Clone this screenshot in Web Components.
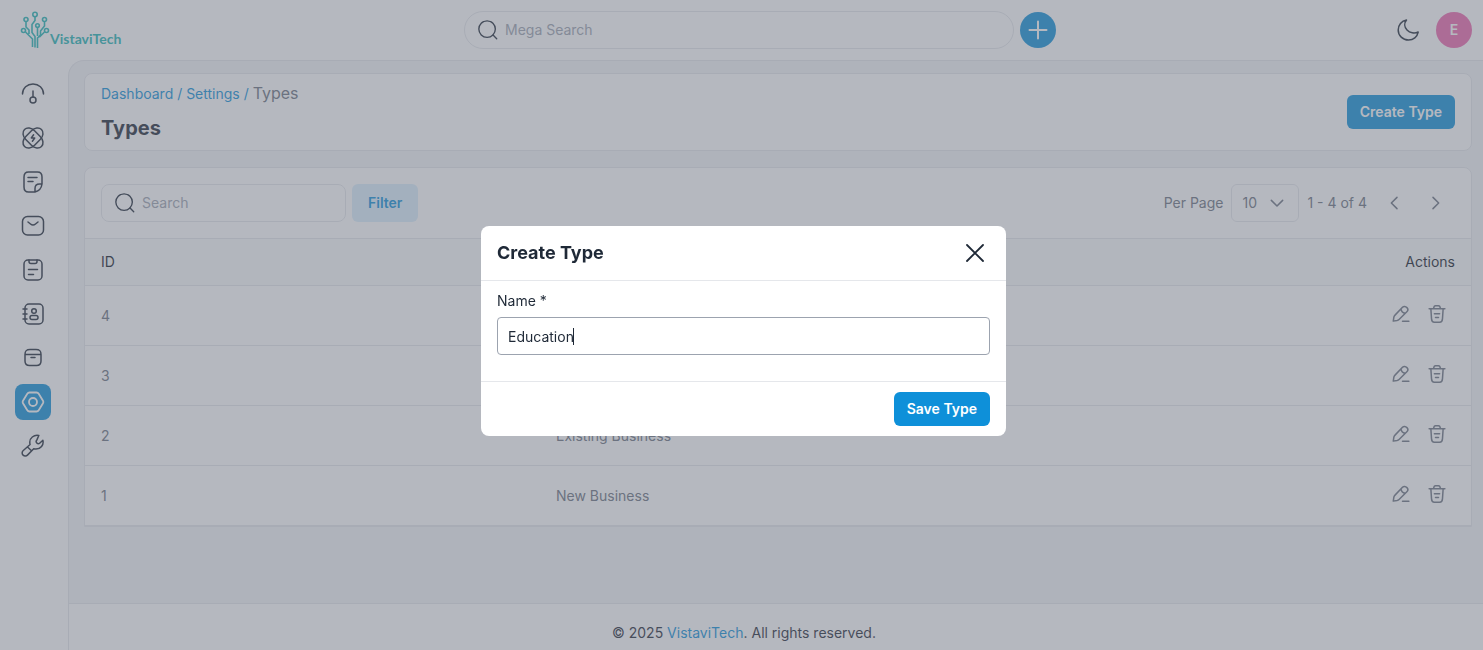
<!DOCTYPE html>
<html lang="en">
<head>
<meta charset="utf-8">
<meta name="viewport" content="width=device-width, initial-scale=1">
<title>Types - VistaviTech</title>
<style>
  :root {
    --primary: #0e90d9;
    --line: #e5e7eb;
    --ink: #1f2937;
    --muted: #6b7280;
    --canvas: #f3f4f6;
  }
  body {
    margin: 0;
    background: #fff;
    color: var(--ink);
    font: 14px/20px Inter, "Noto Sans", sans-serif;
  }
</style>
</head>
<body>
<app-shell>
  <app-header slot="header"></app-header>
  <side-nav slot="nav">
    <nav-item icon="gauge" label="Dashboard"></nav-item>
    <nav-item icon="atom" label="Leads"></nav-item>
    <nav-item icon="note" label="Notes"></nav-item>
    <nav-item icon="mail" label="Mail"></nav-item>
    <nav-item icon="clipboard" label="Tasks"></nav-item>
    <nav-item icon="contacts" label="Contacts"></nav-item>
    <nav-item icon="box" label="Products"></nav-item>
    <nav-item icon="hexagon" label="Settings" active></nav-item>
    <nav-item icon="wrench" label="Configuration"></nav-item>
  </side-nav>
  <page-heading heading="Types">
    <ui-button slot="action">Create Type</ui-button>
  </page-heading>
  <types-grid></types-grid>
  <page-footer slot="footer"></page-footer>
</app-shell>
<type-dialog></type-dialog>

<script>
const ICONS = {
  gauge: '<path d="M1.500 12C1.500 6 6.200 2 12 2s10.500 4 10.500 10M12 9v6"/><circle cx="12" cy="18" r="3"/>',
  atom: '<rect x="0" y="5.800" width="24" height="12.400" rx="8" ry="6.200" transform="rotate(45 12 12)"/><rect x="0" y="5.800" width="24" height="12.400" rx="8" ry="6.200" transform="rotate(-45 12 12)"/><path d="M12.600 8.800 10.300 12h3.400l-2.300 3.200"/>',
  note: '<path d="M21 14V7c0-3-1.500-5-4.500-5h-9C4.500 2 3 4 3 7v10c0 3 1.500 5 4.500 5H14c4-1 6.500-4 7-8ZM14 22v-3.500c0-3 1.500-4.500 4.500-4.500H21M7 7.500h9M7 11.500h5"/>',
  mail: '<rect x="1.500" y="2.500" width="21" height="18.500" rx="5"/><path d="M7 8l2.500 2c1.500 1.200 3.500 1.200 5 0L17 8"/>',
  clipboard: '<rect x="3" y="2" width="18" height="20" rx="4"/><path d="M8 2v1.500C8 5 8.500 5.500 10 5.500h4c1.500 0 2-.5 2-2V2M7.500 11.500h9M7.500 16.500h5"/>',
  contacts: '<rect x="4" y="2" width="18" height="20" rx="4"/><path d="M2 7h4M2 12h4M2 17h4"/><circle cx="13" cy="9" r="2.300"/><rect x="9" y="13.500" width="8" height="4" rx="2"/>',
  box: '<path d="M4 8.500c0-4 1.500-5 5-5h6c3.500 0 5 1 5 5zM4 8.500h16V15c0 3.500-1.500 4.500-4.500 4.500h-7C5.500 19.500 4 18.500 4 15zM10 11.500h4"/>',
  hexagon: '<path d="M8.500 2.500h7c1 0 1.700.4 2.200 1.200l4.300 7c.5.800.5 1.800 0 2.600l-4.300 7c-.5.800-1.200 1.200-2.200 1.200h-7c-1 0-1.700-.4-2.200-1.200l-4.300-7c-.5-.8-.5-1.800 0-2.600l4.300-7c.5-.8 1.200-1.200 2.200-1.200Z"/><circle cx="12" cy="12" r="4"/>',
  wrench: '<path d="M17.800 1.500c-5-1-9.300 2.700-9 7 0 .8.1 1.400.3 2L2.300 16.500c-1.500 1.300-1.500 3.300-.2 4.600s3.200 1.200 4.600-.2l6-6.200c.8.300 1.500.4 2.300.4 4.500 0 8-4 6.900-8.800l-3 2.700c-1 .9-2.300.8-3.100 0s-.8-2.100.1-3.100zM6.500 13l4 3.800"/>',
  search: '<circle cx="11" cy="11" r="9"/><path d="m17.500 17.500 4 4"/>',
  plus: '<path d="M12 3.500v17M3.500 12h17"/>',
  moon: '<path d="M10.500 2C8 5 8.200 9 11 12s7.500 3.800 11.200 2c-1 4.800-4.800 8-9.700 8C6.800 22 2.200 17.700 2.200 12c0-5 3.300-9.200 8.300-10Z"/>',
  edit: '<path d="M14 3 4 13.500c-.8.800-1.300 1.700-1.500 2.700L1.700 21.500l5-.7c1-.2 2-.7 2.700-1.500L19.800 9c1.700-1.700 1.900-3.700.1-5.500S15.700 1.300 14 3ZM12 5.500c.5 3 2.500 5 5.500 5.500M14 21.500h8.500"/>',
  trash: '<path d="M1.500 5h21M7.500 4.700c.3-2.600 1-3.700 2.500-3.700h4c1.500 0 2.200 1.100 2.500 3.700M3.800 5l.9 13.500c.2 3.200 1.200 4.500 3.800 4.500h7c2.600 0 3.600-1.300 3.800-4.500L20.200 5M8.500 11.500h7M10 16.500h4"/>',
  down: '<path d="m3.500 8 8.500 8.500L20.500 8"/>',
  left: '<path d="M16.500 3.500 8 12l8.500 8.500"/>',
  right: '<path d="M7.500 3.500 16 12l-8.500 8.500"/>',
  close: '<path d="m4 4 16 16M20 4 4 20"/>'
};

function define(name, render) {
  customElements.define(name, class extends HTMLElement {
    connectedCallback() {
      if (this.shadowRoot) return;
      this.attachShadow({ mode: 'open' }).innerHTML =
        '<style>*{box-sizing:border-box}button,input,select{font:inherit;color:inherit;margin:0}a{text-decoration:none}</style>' + render(this);
    }
  });
}

define('ui-icon', el => `
  <style>
    :host { display: inline-flex; width: 24px; height: 24px; flex: none; }
    svg { width: 100%; height: 100%; fill: none; stroke: currentColor; stroke-width: var(--icon-stroke, 1.5); stroke-linecap: round; stroke-linejoin: round; }
  </style>
  <svg viewBox="0 0 24 24" aria-hidden="true">${ICONS[el.getAttribute('name')]}</svg>`);

define('ui-button', () => `
  <style>
    :host { display: inline-flex; }
    button { height: 34px; padding: 0 13px; border: 0; border-radius: 6px; background: var(--primary); color: #fff; font-weight: 600; white-space: nowrap; }
    :host([soft]) button { height: 38px; padding: 0 16px; background: #dbeffc; color: var(--primary); }
  </style>
  <button type="button"><slot></slot></button>`);

define('app-shell', () => `
  <style>
    :host { display: grid; grid-template: auto 1fr / 68px minmax(0, 1fr); min-height: 100vh; }
    header { grid-column: 1 / -1; }
    .content { display: flex; flex-direction: column; border: solid var(--line); border-width: 1px 0 0 1px; border-radius: 16px 0 0 0; background: var(--canvas); overflow: hidden; }
    main { flex: 1; display: flex; flex-direction: column; gap: 16px; padding: 12px 11px 16px 15px; }
  </style>
  <header><slot name="header"></slot></header>
  <slot name="nav"></slot>
  <div class="content"><main><slot></slot></main><slot name="footer"></slot></div>`);

define('brand-logo', () => `
  <style>
    :host { display: block; }
    a { display: flex; align-items: flex-end; width: 110px; color: #23b5b5; }
    svg { width: 30px; height: 38px; flex: none; fill: none; stroke: currentColor; stroke-width: 1.6; }
    span { font: 700 14px/20px Lato, sans-serif; }
  </style>
  <a href="#" aria-label="VistaviTech home">
    <svg viewBox="0 0 30 38" aria-hidden="true">
      <circle cx="15" cy="3.500" r="2.200"/><circle cx="6" cy="8.500" r="2"/><circle cx="24.500" cy="8.500" r="2"/><circle cx="3.500" cy="19.500" r="2"/><circle cx="26.500" cy="19.500" r="2"/><circle cx="17.500" cy="14.500" r="1.800"/>
      <path d="M15 5.500v4l-3 4v8l3 4v11M6 11v5l3 3v4M24.500 11v4l-4 5v4l-3 3v10M5.500 21l7 7v8M24.500 21l-5 5M17.500 17v8"/>
    </svg><span>VistaviTech</span>
  </a>`);

define('app-header', () => `
  <style>
    :host { display: flex; align-items: center; justify-content: space-between; height: 60px; padding: 0 11px 0 20px; background: #fff; }
    .find { display: flex; align-items: center; gap: 6px; }
    label { display: flex; align-items: center; gap: 4px; width: 550px; height: 38px; padding: 0 12px; border: 1px solid var(--line); border-radius: 19px; }
    label ui-icon { width: 22px; height: 22px; }
    input { flex: 1; min-width: 0; border: 0; outline: 0; background: none; padding: 0 2px; }
    input::placeholder { color: #9ca3af; }
    button { display: grid; place-items: center; width: 36px; height: 36px; padding: 0; border: 0; border-radius: 50%; }
    .add { background: var(--primary); color: #fff; --icon-stroke: 2; }
    .tools { display: flex; gap: 10px; }
    .theme { background: none; }
    .me { background: #ec67ad; color: #fff; font-weight: 600; }
  </style>
  <brand-logo></brand-logo>
  <div class="find">
    <label><ui-icon name="search"></ui-icon><input placeholder="Mega Search" aria-label="Mega Search"></label>
    <button class="add" type="button" aria-label="Add"><ui-icon name="plus"></ui-icon></button>
  </div>
  <div class="tools">
    <button class="theme" type="button" aria-label="Dark mode"><ui-icon name="moon"></ui-icon></button>
    <button class="me" type="button">E</button>
  </div>`);

define('side-nav', () => `
  <style>
    :host { display: block; }
    nav { display: flex; flex-direction: column; align-items: center; gap: 8px; padding: 16px 2px 0 0; }
  </style>
  <nav aria-label="Main"><slot></slot></nav>`);

define('nav-item', el => `
  <style>
    :host { display: block; }
    a { display: grid; place-items: center; width: 36px; height: 36px; border-radius: 8px; color: var(--ink); }
    :host([active]) a { background: var(--primary); color: #fff; --icon-stroke: 1.8; }
  </style>
  <a href="#" aria-label="${el.getAttribute('label')}"><ui-icon name="${el.getAttribute('icon')}"></ui-icon></a>`);

define('page-heading', el => `
  <style>
    :host { display: flex; align-items: center; justify-content: space-between; padding: 7px 16px 8px; background: #fff; border: 1px solid var(--line); border-radius: 8px; }
    nav { line-height: 24px; color: var(--primary); }
    a { color: inherit; }
    nav span { font-size: 16px; color: var(--muted); }
    h1 { margin: 8px 0 0; font-size: 20px; line-height: 28px; font-weight: 700; }
  </style>
  <div>
    <nav aria-label="Breadcrumb"><a href="#">Dashboard</a> / <a href="#">Settings</a> / <span>${el.getAttribute('heading')}</span></nav>
    <h1>${el.getAttribute('heading')}</h1>
  </div>
  <slot name="action"></slot>`);

define('grid-toolbar', () => `
  <style>
    :host { display: flex; align-items: center; justify-content: space-between; padding: 16px; color: var(--muted); }
    div { display: flex; align-items: center; }
    .find { gap: 6px; }
    .search { display: flex; align-items: center; gap: 4px; width: 245px; height: 38px; padding: 0 12px; border: 1px solid var(--line); border-radius: 8px; color: var(--ink); }
    .search ui-icon { width: 22px; height: 22px; }
    input { flex: 1; min-width: 0; border: 0; outline: 0; background: none; padding: 0 2px; }
    input::placeholder { color: #9ca3af; }
    .pages { gap: 8px; }
    .size { position: relative; }
    select { appearance: none; width: 68px; height: 38px; padding: 0 10px; border: 1px solid var(--line); border-radius: 6px; background: none; }
    .size ui-icon { position: absolute; right: 14px; width: 16px; height: 16px; pointer-events: none; }
    .pages ui-icon { --icon-stroke: 2.3; }
    button { display: grid; place-items: center; width: 38px; height: 38px; padding: 0; border: 0; background: none; }
    button ui-icon { width: 16px; height: 16px; }
    .steps { gap: 4px; }
  </style>
  <div class="find">
    <label class="search"><ui-icon name="search"></ui-icon><input placeholder="Search" aria-label="Search"></label>
    <ui-button soft>Filter</ui-button>
  </div>
  <div class="pages">
    <label for="size">Per Page</label>
    <div class="size"><select id="size"><option>10</option></select><ui-icon name="down"></ui-icon></div>
    <span>1 - 4 of 4</span>
    <div class="steps">
      <button type="button" aria-label="Previous page"><ui-icon name="left"></ui-icon></button>
      <button type="button" aria-label="Next page"><ui-icon name="right"></ui-icon></button>
    </div>
  </div>`);

const TYPES = [[4, ''], [3, ''], [2, 'Existing Business'], [1, 'New Business']];

define('types-grid', () => `
  <style>
    :host { display: block; background: #fff; border: 1px solid var(--line); border-radius: 8px 8px 0 0; }
    table { width: 100%; border-collapse: separate; border-spacing: 0; table-layout: fixed; }
    th, td { padding: 0 16px; text-align: left; font-weight: 400; }
    th { height: 48px; background: #f9fafb; border: solid var(--line); border-width: 1px 0; color: #111827; }
    td { height: 60px; color: var(--muted); border-bottom: 1px solid var(--line); }
    th:first-child { width: 455px; }
    th:last-child { width: 160px; text-align: right; }
    .acts { display: flex; justify-content: flex-end; padding-bottom: 4px; }
    button { display: grid; place-items: center; width: 36px; height: 36px; padding: 0; border: 0; background: none; }
    button ui-icon { width: 18px; height: 18px; --icon-stroke: 2; }
  </style>
  <grid-toolbar></grid-toolbar>
  <table>
    <thead><tr><th>ID</th><th aria-label="Name"></th><th>Actions</th></tr></thead>
    <tbody>${TYPES.map(([id, name]) => `
      <tr><td>${id}</td><td>${name}</td><td><div class="acts">
        <button type="button" aria-label="Edit"><ui-icon name="edit"></ui-icon></button>
        <button type="button" aria-label="Delete"><ui-icon name="trash"></ui-icon></button>
      </div></td></tr>`).join('')}
    </tbody>
  </table>`);

define('page-footer', () => `
  <style>
    :host { display: block; padding: 19px 64px 7px 0; background: #fff; border-top: 1px solid var(--line); text-align: center; }
    a { color: var(--primary); }
  </style>
  © 2025 <a href="#">VistaviTech</a>. All rights reserved.`);

define('type-dialog', () => `
  <style>
    :host { position: fixed; inset: 0; display: grid; place-items: center; padding: 12px 0 0 4px; box-sizing: border-box; background: rgba(107, 114, 128, .5); }
    form { width: 100%; max-width: 525px; background: #fff; border-radius: 8px; }
    header { display: flex; align-items: center; justify-content: space-between; height: 55px; padding: 0 16px; border-bottom: 1px solid var(--line); }
    h2 { margin: 0; font-size: 18px; line-height: 24px; font-weight: 700; }
    .close { display: grid; place-items: center; width: 30px; height: 30px; padding: 0; border: 0; background: none; --icon-stroke: 1.8; }
    .field { padding: 10px 16px 26px; }
    label { display: block; margin-bottom: 6px; }
    input { display: block; width: 100%; height: 38px; padding: 0 10px; border: 1px solid #9ca3af; border-radius: 4px; outline: 0; caret-color: transparent;
      background: linear-gradient(var(--ink), var(--ink)) 75px center / 1px 17px no-repeat #fff; }
    footer { display: flex; justify-content: flex-end; padding: 10px 16px; border-top: 1px solid var(--line); }
  </style>
  <form role="dialog" aria-modal="true" aria-labelledby="title">
    <header><h2 id="title">Create Type</h2><button class="close" type="button" aria-label="Close"><ui-icon name="close"></ui-icon></button></header>
    <div class="field"><label for="name">Name *</label><input id="name" value="Education"></div>
    <footer><ui-button>Save Type</ui-button></footer>
  </form>`);
</script>
</body>
</html>
